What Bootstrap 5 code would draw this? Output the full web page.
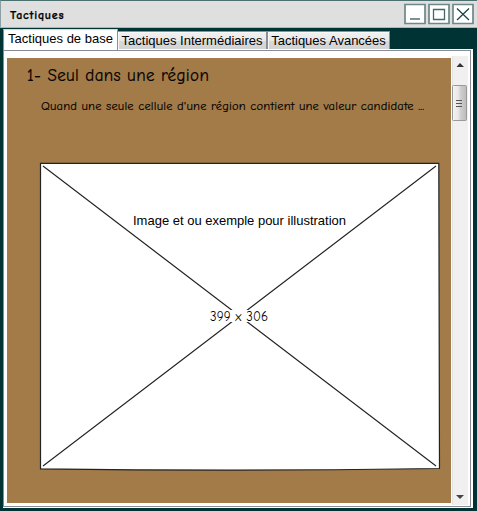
<!DOCTYPE html>
<html lang="fr">
<head>
<meta charset="utf-8">
<meta name="viewport" content="width=device-width, initial-scale=1">
<title>Tactiques</title>
<link href="https://cdn.jsdelivr.net/npm/bootstrap@5.3.0/dist/css/bootstrap.min.css" rel="stylesheet">
<style>
body{background:#033;color:#000;font-family:"Liberation Sans",Arial,sans-serif;width:477px;height:511px;overflow:hidden;line-height:1}
.comic{font-family:"Comic Sans MS","Comic Neue","Noto Sans",sans-serif;white-space:nowrap}
.titlebar{height:28px;background:#dfdfdf;border-top:1px solid #4d7070;border-left:1px solid #8aa0a0;border-bottom:1px solid #a9b9b9;padding:1px 3px 0 9px}
.titlebar h1{font-size:12px;font-weight:700;letter-spacing:.8px;line-height:27px;-webkit-text-stroke:.25px #000}
.winbtns{gap:2px}
.winbtns svg{display:block}
.tabs{height:20px;margin:1px 0 0 3px;position:relative;z-index:1}
.tabs .nav-link{font-size:13px;line-height:17px;height:18px;padding:0;color:#000;border:1px solid #8b8f96;border-bottom:0;border-radius:0;background:linear-gradient(#f1f1f1,#e9e9e9 50%,#d9d9d9 52%,#d3d3d3);text-align:center;white-space:nowrap;box-shadow:inset 1px 1px #f8f8f8}
.tabs .nav-link.active{height:21px;line-height:18px;background:#fff;border-color:#d6dadd #8b8f96 #fff #8b8f96;margin-bottom:-1px}
.t1{width:115px}.tabs .t2{width:150px;margin-left:-1px}.t3{width:123px}
.frame-out{margin-left:3px;width:470px;height:459px;background:#fff;padding:1px 2px 1px 0}
.frame-in{height:457px;border:1px solid #898c95;padding:5px 2px 1px 3px}
.content{width:444px;height:445px;margin-top:2px;background:#a37b49;padding:8px 0 0 20px}
.content h2{font-size:17px;line-height:20px;letter-spacing:.38px;-webkit-text-stroke:.2px #000}
.content p{font-size:12.5px;line-height:16px;margin:12px 0 0 14px;letter-spacing:.19px;-webkit-text-stroke:.15px #000}
.placeholder-art{display:block;margin:48px 0 0 12px}
.art-size{-webkit-text-stroke:.15px #000}
.scroller{width:16px;height:449px;background:#f0f0f0;border-left:1px solid #e3e3e3;margin-left:1px}
.scroller svg{display:block;margin-left:-1px}
</style>
</head>
<body>
<header class="titlebar d-flex justify-content-between">
  <h1 class="comic mb-0">Tactiques</h1>
  <div class="winbtns d-flex">
    <svg width="22" height="23" viewBox="0 0 22 23" fill="none"><path d="M1 2.5h20v19H1z" fill="#fff" stroke="#6e8888" stroke-width="1.7"/><path d="M6 17h10" stroke="#7b9292" stroke-width="2"/></svg>
    <svg width="22" height="23" viewBox="0 0 22 23" fill="none"><path d="M1 2.5h20v19H1z" fill="#fff" stroke="#6e8888" stroke-width="1.7"/><path d="M5.5 7.5h11v10h-11z" stroke="#456868" stroke-width="1.3"/></svg>
    <svg width="22" height="23" viewBox="0 0 22 23" fill="none"><path d="M1 2.5h20v19H1z" fill="#fff" stroke="#6e8888" stroke-width="1.7"/><path d="M5 6.500 17 18M17 6.500 5 18" stroke="#144141" stroke-width="1.2"/></svg>
  </div>
</header>
<nav class="tabs nav flex-nowrap align-items-end">
  <a class="nav-link active t1" href="#">Tactiques de base</a>
  <a class="nav-link t2" href="#">Tactiques Intermédiaires</a>
  <a class="nav-link t3" href="#">Tactiques Avancées</a>
</nav>
<main class="frame-out">
  <div class="frame-in d-flex">
    <section class="content">
      <h2 class="comic mb-0 fw-normal">1- Seul dans une région</h2>
      <p class="comic">Quand une seule cellule d'une région contient une valeur candidate ...</p>
      <svg class="placeholder-art" width="402" height="310" viewBox="39 162 402 310">
        <path d="M40.500 163.300H438.800L439.500 468.500Q240 471.500 40.500 468.800Z" fill="#fff" stroke="#222" stroke-width="1.2"/>
        <path d="M43 166 436 466M436 166 43 466" stroke="#222" stroke-width="1.1"/>
        <path d="M209 310h62v12h-62z" fill="#fff"/>
        <text x="133" y="225" font-size="13" textLength="213">Image et ou exemple pour illustration</text>
        <text class="comic art-size" x="210" y="321" font-size="13" textLength="58">399 x 306</text>
      </svg>
    </section>
    <aside class="scroller">
      <svg width="16" height="449" viewBox="452 56 16 449">
        <defs><linearGradient id="thumb"><stop offset="0" stop-color="#f5f5f5"/><stop offset=".45" stop-color="#e5e5e5"/><stop offset=".55" stop-color="#d0d0d0"/><stop offset="1" stop-color="#bbb"/></linearGradient></defs>
        <path d="M456.500 67 460 63l4 4z" fill="#333"/>
        <rect x="452.500" y="85.500" width="14" height="35" rx="1" fill="url(#thumb)" stroke="#999"/>
        <path d="M456 100.500h6M456 103.500h6M456 106.500h6" stroke="#555"/>
        <path d="M456 495h8l-4 4z" fill="#444"/>
      </svg>
    </aside>
  </div>
</main>
<script src="https://cdn.jsdelivr.net/npm/bootstrap@5.3.0/dist/js/bootstrap.bundle.min.js"></script>
</body>
</html>
